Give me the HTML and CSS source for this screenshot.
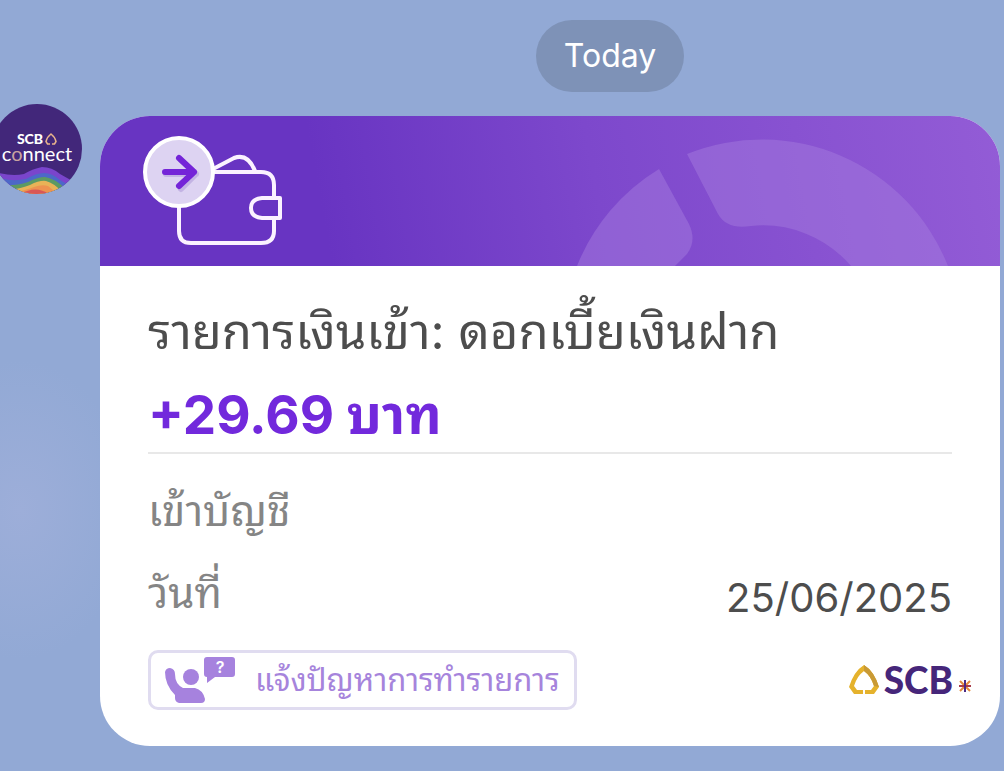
FILE: index.html
```html
<!DOCTYPE html>
<html lang="th">
<head>
    <meta charset="UTF-8">
    <meta name="viewport" content="width=device-width, initial-scale=1.0">
    <title>SCB Connect</title>
    <link rel="stylesheet" href="styles.css">
</head>
<body>
    <main class="chat">
        <div class="day"><span class="day-pill">Today</span></div>

        <div class="message">
            <!-- Sender avatar -->
            <div class="avatar">
                <svg class="waves" viewBox="0 0 90 90" aria-hidden="true">
                    <path fill="#7a45cc" d="M0 67Q18 73 32 70Q40 65 50 63Q60 63 68 70L84 79V90H0z"/>
                    <path fill="#4d68c8" d="M4 73Q20 78 34 75Q44 69 52 69Q60 69 68 76L78 82V90H4z"/>
                    <path fill="#5c9a63" d="M10 81Q24 82 36 78Q46 73 53 73Q62 74 74 85V90H10z"/>
                    <path fill="#e9b357" d="M16 86Q28 85 38 81Q48 76 54 77Q62 79 70 88V90H16z"/>
                    <path fill="#ee9350" d="M22 89Q34 86 42 83Q50 80 56 82L66 90H22z"/>
                    <path fill="#d95757" d="M28 90Q44 81 57 90z"/>
                </svg>
                <div class="avatar-text">
                    <span class="avatar-scb">SCB<svg viewBox="0 0 12 12" aria-hidden="true"><path fill="none" stroke="#e9b48c" stroke-width="1.500" d="M5 11H2.500L1 8.500Q2 4 6 1Q10 4 11 8.500L9.500 11H7"/></svg></span>
                    <span class="avatar-connect">c<i>o</i>nnect</span>
                </div>
            </div>

            <article class="card">
                <header class="card-header">
                    <svg class="wallet" viewBox="0 0 142 112" aria-hidden="true">
                        <g fill="none" stroke="#fbf2ff" stroke-width="4" stroke-linejoin="round">
                            <path d="M131 62V49Q131 36 118 36H70M36 70V95Q36 107 48 107H118Q131 107 131 95V82"/>
                            <path d="M70 33L91 22Q105 17 112 35"/>
                            <path d="M119 62H137V82H119Q108 81 108 72T119 62z"/>
                        </g>
                        <circle cx="36" cy="36" r="34" fill="#ddd3f2" stroke="#fff" stroke-width="4"/>
                        <path fill="none" stroke="#9d84cf" stroke-opacity=".4" stroke-width="6" stroke-linecap="round" stroke-linejoin="round" d="M23 38H53M38 24L53 38L38 53"/>
                        <path fill="none" stroke="#7424d8" stroke-width="6" stroke-linecap="round" stroke-linejoin="round" d="M22 36H51M36 22L51 36L36 50"/>
                    </svg>
                    <svg class="ring" viewBox="0 0 460 150" aria-hidden="true">
                        <path d="M37 150A200 200 0 0 1 119 53L149 108Q157 125 147 138L135 150z"/>
                        <path d="M147 38A200 200 0 0 1 408 150H311A116 116 0 0 0 211 110Q187 114 178 98z"/>
                    </svg>
                </header>

                <div class="card-body">
                    <h1>รายการเงินเข้า: ดอกเบี้ยเงินฝาก</h1>
                    <p class="amount">+29.69 บาท</p>
                    <dl class="details">
                        <div class="row">
                            <dt>เข้าบัญชี</dt>
                            <dd></dd>
                        </div>
                        <div class="row">
                            <dt>วันที่</dt>
                            <dd>25/06/2025</dd>
                        </div>
                    </dl>
                </div>

                <footer class="card-footer">
                    <button type="button" class="report">
                        <svg viewBox="0 0 72 48" aria-hidden="true">
                            <circle cx="26" cy="21" r="8"/>
                            <path d="M0 16Q1 12 5 12Q10 13 10 18Q10 28 18 32H30Q38 34 40 43Q40 47 36 47H14Q10 46 10 42L10 39Q0 29 0 16z"/>
                            <path d="M42 1H67Q70 1 70 4V18Q70 21 67 21H50L42 27V21Q39 21 39 18V4Q39 1 42 1z"/>
                            <text x="55" y="17">?</text>
                        </svg>
                        <span>แจ้งปัญหาการทำรายการ</span>
                    </button>
                    <div class="logo">
                        <svg class="leaf" viewBox="0 0 30 32" aria-hidden="true">
                            <path fill="#e5b22c" d="M15 1Q25 7 30 23L25 30H16V26H22L25 22Q22 12 15 7Q8 12 5 22L8 26H14V30H5L0 23Q5 7 15 1z"/>
                            <path fill="#c99a35" d="M15 1Q25 7 30 23L25 22Q22 12 15 7z"/>
                        </svg>
                        <span>SCB</span>
                        <svg class="star" viewBox="0 0 14 14" aria-hidden="true">
                            <path stroke="#e38b3c" stroke-width="2" d="M2 2L12 12M12 2L2 12"/>
                            <path stroke="#a93c4a" stroke-width="2" d="M1 7H13"/>
                            <path stroke="#4a2a86" stroke-width="2" d="M7 1V13"/>
                        </svg>
                    </div>
                </footer>
            </article>
        </div>
    </main>
</body>
</html>
```
FILE: styles.css
```css
* {
    box-sizing: border-box;
}

body {
    margin: 0;
    min-height: 100vh;
    font-family: Inter, "Noto Sans Thai Looped", "Noto Sans Thai", "Noto Sans", sans-serif;
    color: #4d4d4d;
    background: radial-gradient(ellipse 110px 150px at 20px 510px, #9daed9, rgba(157, 174, 217, 0)) #92a9d5;
}

.chat {
    padding: 20px 4px 25px 0;
}

/* Day marker */
.day {
    display: flex;
    justify-content: center;
    padding-left: 220px;
    margin-bottom: 24px;
}

.day-pill {
    padding: 16px 28px;
    border-radius: 36px;
    background: #7e92b7;
    color: #fff;
    font-size: 32px;
    line-height: 40px;
}

.message {
    display: flex;
    align-items: flex-start;
    gap: 18px;
}

/* Avatar */
.avatar {
    position: relative;
    flex: none;
    width: 90px;
    height: 90px;
    margin: -12px 0 0 -8px;
    border-radius: 50%;
    overflow: hidden;
    background: #42277a;
}

.waves {
    position: absolute;
    inset: 0;
}

.avatar-text {
    position: relative;
    display: flex;
    flex-direction: column;
    align-items: center;
    padding-top: 28px;
    color: #fff;
    font-family: Lato, sans-serif;
}

.avatar-scb {
    display: flex;
    align-items: center;
    gap: 2px;
    font-size: 14px;
    font-weight: 900;
    line-height: 14px;
}

.avatar-scb svg {
    width: 12px;
    height: 12px;
}

.avatar-connect {
    font-size: 20px;
    line-height: 14px;
}

.avatar-connect i {
    font-style: normal;
    color: #c9a3a0;
}

/* Card */
.card {
    flex: 1;
    border-radius: 50px;
    overflow: hidden;
    background: #fff;
}

.card-header {
    display: flex;
    justify-content: space-between;
    height: 150px;
    padding-left: 43px;
    background: linear-gradient(80deg, #6834c2 25%, #7d48cc 55%, #935cd6);
}

.wallet {
    width: 142px;
    height: 112px;
    margin-top: 20px;
}

.ring {
    width: 460px;
    height: 150px;
    fill: #a47ade;
    fill-opacity: .5;
}

.card-body {
    padding: 24px 48px 0;
}

h1 {
    margin: 0 0 4px;
    font-size: 49px;
    font-weight: 400;
    line-height: 84px;
    white-space: nowrap;
}

.amount {
    margin: 0;
    border-bottom: 2px solid #e8e8e8;
    color: #7229dc;
    font-size: 53px;
    font-weight: 700;
    line-height: 74px;
}

.details {
    margin: 12px 0 0;
}

.row {
    display: flex;
    justify-content: space-between;
    align-items: center;
    height: 82px;
}

.row dt {
    color: #858585;
    font-size: 42px;
}

.row dd {
    margin: 0;
    padding-top: 16px;
    font-size: 40px;
}

.card-footer {
    display: flex;
    justify-content: space-between;
    align-items: center;
    padding: 20px 28px 36px 48px;
}

.report {
    display: flex;
    align-items: center;
    gap: 18px;
    height: 60px;
    padding: 0 14px;
    border: 3px solid #e0dcf0;
    border-radius: 10px;
    background: #fff;
    color: #a684dc;
    font-family: inherit;
    font-size: 31px;
    line-height: 48px;
}

.report svg {
    width: 72px;
    height: 48px;
    fill: #a682de;
}

.report text {
    fill: #fff;
    font-size: 16px;
    font-weight: 600;
    text-anchor: middle;
}

.logo {
    display: flex;
    align-items: center;
    gap: 5px;
    color: #46267a;
    font-family: Lato, sans-serif;
    font-size: 37px;
    font-weight: 900;
    line-height: 40px;
}

.leaf {
    width: 30px;
    height: 32px;
}

.star {
    width: 14px;
    height: 14px;
    margin-top: 12px;
}
```
